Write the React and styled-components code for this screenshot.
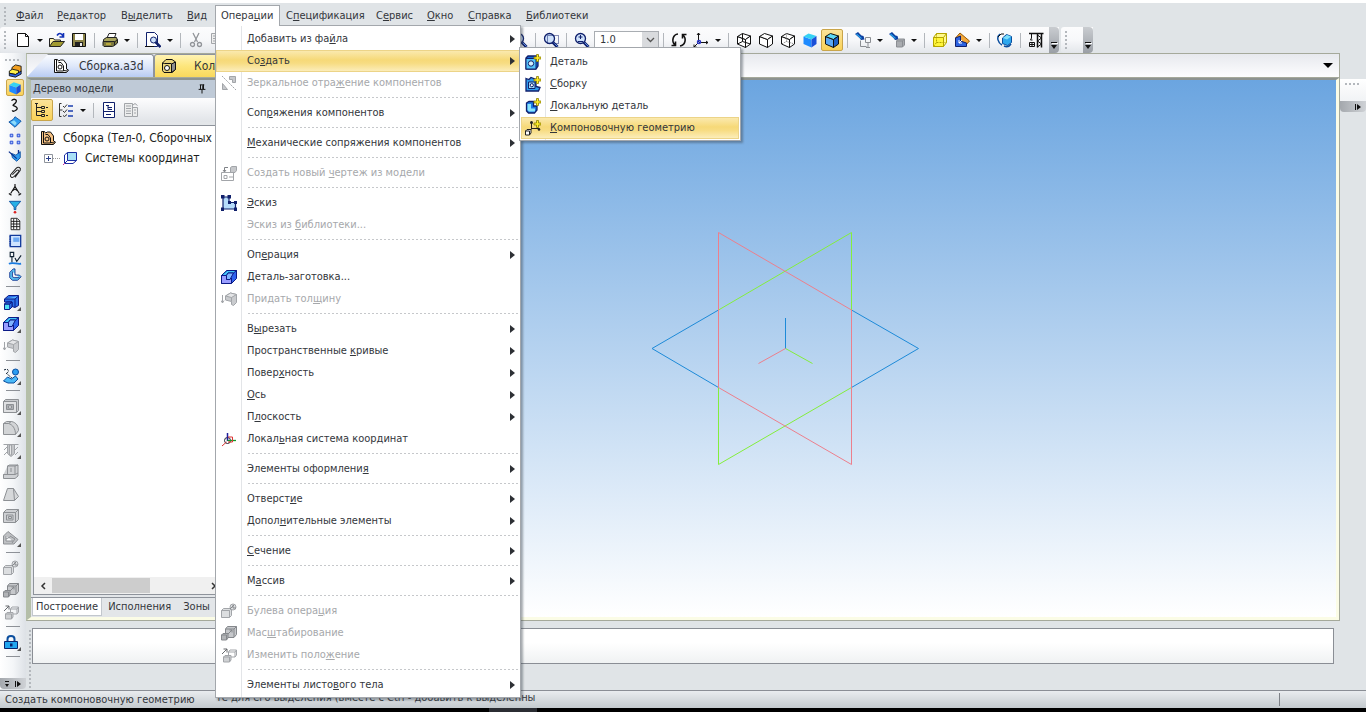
import React from 'react';
import styled, { createGlobalStyle, css } from 'styled-components';

const GlobalStyle = createGlobalStyle`
  * {
    box-sizing: border-box;
  }
  body {
    margin: 0;
    overflow: hidden;
    background: #e0e4e7;
    color: #33363b;
    font: 11px/16px 'DejaVu Sans Condensed', 'DejaVu Sans', sans-serif;
  }
  button, select, input {
    margin: 0;
    padding: 0;
    border: 0;
    background: transparent;
    color: inherit;
    font: inherit;
  }
  svg {
    display: block;
    flex: none;
  }
`;

const NAVY = '#10206c';
const GREY = '#a2a5a9';

const highlight = css`
  background: linear-gradient(#fbebb4, #f6d978 45%, #f7dc82 60%, #fcefc0);
  box-shadow: inset 0 0 0 1px #ecd488;
`;

/* ---------- page ---------- */

const Page = styled.div`
  display: flex;
  flex-direction: column;
  min-height: 100vh;
  border-top: 3px solid #fff;
`;

const MenuBar = styled.nav`
  display: flex;
  align-items: stretch;
  position: relative;
  z-index: 10;
  height: 24px;
  padding: 2px 0 0 4px;
  background: #e0e4e7;
`;

const Grip = styled.span`
  flex: none;
  align-self: center;
  width: ${({ $row }) => ($row ? '16px' : '2px')};
  height: ${({ $row, $length }) => ($row ? '2px' : $length || '18px')};
  background: ${({ $row }) =>
    `repeating-linear-gradient(${$row ? '90deg' : '180deg'}, #b4b8bd 0 2px, transparent 2px 4px)`};
`;

const MenuEntry = styled.div`
  position: relative;
  flex: none;
  width: ${({ $width }) => $width}px;
  ${({ $first }) => $first && 'margin-left: 4px;'}
`;

const MenuButton = styled.button`
  width: 100%;
  height: 21px;
  padding: 0 6px;
  text-align: left;
  white-space: nowrap;
  ${({ $open }) =>
    $open &&
    css`
      position: relative;
      z-index: 2;
      background: #fff;
      border: 1px solid #a3a7ac;
      border-bottom: 0;
      padding: 0 5px;
    `}
`;

const Dropdown = styled.div`
  position: absolute;
  top: 20px;
  left: 0;
  width: 306px;
  padding: 2px 0 1px;
  border: 1px solid #a3a7ac;
  background: linear-gradient(90deg, #fff 25px, #e3e5e8 25px 26px, #fff 26px);
  box-shadow: 2px 2px 2px rgba(60, 70, 80, 0.45);
`;

const Submenu = styled(Dropdown)`
  top: 21px;
  left: 303px;
  z-index: 3;
  width: 222px;
  padding: 3px 1px 1px;
`;

const Row = styled.button`
  display: flex;
  align-items: center;
  width: 100%;
  height: 22px;
  padding-right: 5px;
  text-align: left;
  color: ${({ disabled }) => (disabled ? '#a6a8ab' : 'inherit')};
  ${({ $active }) => $active && highlight}
`;

const RowIcon = styled.span`
  flex: none;
  width: ${({ $sub }) => ($sub ? '29px' : '31px')};
  padding-left: ${({ $sub }) => ($sub ? '4px' : '5px')};
`;

const RowLabel = styled.span`
  flex: 1;
  white-space: nowrap;
`;

const MenuLine = styled.hr`
  height: 8px;
  margin: 0 1px 0 32px;
  border: 0;
  background: repeating-linear-gradient(90deg, #c6c8cb 0 2px, transparent 2px 4px) 0 3px / 100% 1px no-repeat;
`;

const RightArrow = styled.i`
  width: 0;
  height: 0;
  border: 4px solid transparent;
  border-left: 5px solid #2d3035;
  border-right: 0;
`;

/* ---------- toolbars ---------- */

const Bars = styled.div`
  display: flex;
  gap: 2px;
  height: 26px;
`;

const Bar = styled.div`
  display: flex;
  align-items: center;
  background: linear-gradient(#fcfcfd, #f7f8fa 50%, #e3e6ea);
  border-radius: 3px 0 0 3px;
  padding-left: 4px;
`;

const BarSpace = styled.span`
  flex: none;
  width: ${({ $width }) => $width}px;
`;

const Tool = styled.button`
  display: flex;
  flex: none;
  align-items: center;
  justify-content: center;
  width: 22px;
  height: 22px;
  ${({ $on }) =>
    $on &&
    css`
      background: linear-gradient(#fbe39a, #fad257);
      border: 1px solid #c9a54a;
      border-radius: 2px;
    `}
`;

const Caret = styled.button`
  flex: none;
  width: 12px;
  height: 22px;
  &::after {
    content: '';
    display: block;
    margin: 0 auto;
    width: 0;
    border: 3px solid transparent;
    border-top-color: #111;
    border-bottom: 0;
  }
`;

const BarLine = styled.span`
  flex: none;
  width: 1px;
  height: 15px;
  margin: 0 4px;
  background: #b3b7bc;
`;

const Overflow = styled.button`
  display: flex;
  align-items: flex-end;
  justify-content: center;
  width: 10px;
  height: 26px;
  padding-bottom: 3px;
  border-radius: 0 4px 4px 0;
  background: linear-gradient(#c9ccd0, #9a9fa6);
`;

const ScaleBox = styled.div`
  display: flex;
  width: 65px;
  height: 19px;
  margin-left: 1px;
  border: 1px solid #a9adb2;
  background: #fff;
`;

const ScaleSelect = styled.select`
  flex: 1;
  min-width: 0;
  appearance: none;
  padding-left: 5px;
  background: #fff;
`;

const ScaleArrow = styled.span`
  display: flex;
  align-items: center;
  justify-content: center;
  width: 16px;
  background: #d9dbde;
`;

/* ---------- body ---------- */

const Body = styled.div`
  display: flex;
  flex: 1;
`;

const SideBar = styled.aside`
  display: flex;
  flex-direction: column;
  flex: none;
  width: 26px;
  margin-bottom: 1px;
  background: linear-gradient(90deg, #fff, #f4f6f8 50%, #dde1e6);
`;

const SideGrip = styled.div`
  height: 9px;
  padding: 4px 0 0 5px;
  display: flex;
`;

const SmallTool = styled(Tool)`
  width: 18px;
  height: 17px;
  margin-left: 6px;
`;

const BigTool = styled(Tool)`
  position: relative;
  ${({ $more }) =>
    $more &&
    css`
      &::after {
        content: '';
        position: absolute;
        right: 1px;
        bottom: 2px;
        border: 2px solid #555;
        border-top-color: transparent;
        border-left-color: transparent;
      }
    `}
`;

const SideLine = styled.span`
  width: 14px;
  height: 8px;
  margin-left: 6px;
  background: linear-gradient(#8d9197, #8d9197) 0 3px / 100% 1px no-repeat;
`;

const SideEnd = styled.button`
  display: flex;
  align-items: center;
  justify-content: space-evenly;
  width: 26px;
  height: 11px;
  margin-top: ${({ $push }) => ($push ? 'auto' : 0)};
  border-radius: 0 0 4px 4px;
  background: linear-gradient(90deg, #a4a8ad, #cfd2d6);
`;

const Work = styled.div`
  display: flex;
  flex: 1;
  flex-direction: column;
  min-width: 0;
`;

const DocArea = styled.div`
  display: flex;
  flex: 1;
`;

const DocWindow = styled.main`
  display: flex;
  flex: 1;
  flex-direction: column;
  min-width: 0;
  border: 1px solid #a5a99b;
  border-left-color: #b4bea8;
`;

const DocTabs = styled.div`
  display: flex;
  height: 24px;
  background: linear-gradient(#e7e9ee, #fdfdfe);
  border-bottom: 1px solid #a5a99b;
`;

const DocTab = styled.button`
  display: flex;
  align-items: center;
  width: ${({ $wide }) => ($wide ? '127px' : '130px')};
  padding-left: ${({ $wide }) => ($wide ? '25px' : '6px')};
  gap: ${({ $wide }) => ($wide ? '10px' : '17px')};
  font-size: 12px;
  white-space: nowrap;
  background: ${({ $wide }) =>
    $wide ? 'linear-gradient(#fafcff, #dfe8fa 50%, #b9ccf3)' : 'linear-gradient(#fff3b4, #fde67c 50%, #f9d85c)'};
  border: 1px solid #8e939b;
  border-bottom: 0;
  border-radius: 3px 3px 0 0;
  ${({ $wide }) => $wide && 'clip-path: polygon(0 100%, 21px 0, 100% 0, 100% 100%);'}
`;

const TabList = styled.button`
  width: 22px;
  margin-left: auto;
  &::after {
    content: '';
    display: block;
    width: 0;
    margin: 0 auto;
    border: 5px solid transparent;
    border-top-color: #000;
    border-bottom: 0;
  }
`;

const DocBody = styled.div`
  display: flex;
  flex: 1;
  border: 3px solid #fbfce6;
  border-top: 2px solid #8d9390;
  border-left: 4px solid #b4bea8;
`;

const TreePanel = styled.section`
  display: flex;
  flex-direction: column;
  flex: none;
  width: 203px;
  background: #e3e6e9;
`;

const PanelTitle = styled.header`
  display: flex;
  align-items: center;
  justify-content: space-between;
  height: 18px;
  padding: 0 26px 0 2px;
  background: #bfcad7;
`;

const PanelTools = styled.div`
  display: flex;
  align-items: center;
  height: 24px;
  background: linear-gradient(#fdfdfe, #e1e4e8);
`;

const TreeBox = styled.div`
  display: flex;
  flex: 1;
  flex-direction: column;
  margin-top: 3px;
  margin-left: 2px;
  padding-top: 2px;
  background: #fff;
  border: 1px solid #8e939b;
  overflow: hidden;
`;

const TreeRow = styled.div`
  display: flex;
  align-items: center;
  height: 20px;
  padding-left: ${({ $child }) => ($child ? '10px' : '6px')};
  gap: 7px;
  white-space: nowrap;
  font-size: 12px;
  color: #1c1d20;
`;

const TreeLead = styled.span`
  display: flex;
  align-items: center;
  flex: none;
  width: 11px;
`;

const ScrollBar = styled.div`
  display: flex;
  align-items: center;
  height: 17px;
  margin-top: auto;
  background: #f0f0f0;
`;

const ScrollStep = styled.button`
  display: flex;
  align-items: center;
  justify-content: center;
  width: 18px;
`;

const ScrollTrack = styled.div`
  width: 153px;
`;

const ScrollThumb = styled.div`
  width: 98px;
  height: 15px;
  background: #cdcdcd;
`;

const PanelTabs = styled.div`
  display: flex;
  height: 20px;
  margin-top: 2px;
  padding: 0 0 1px 1px;
  border-top: 1px solid #8e939b;
`;

const PanelTab = styled.button`
  padding: 0 ${({ $on }) => ($on ? '3px' : '6px')};
  background: ${({ $on }) => ($on ? '#fff' : 'transparent')};
  border: ${({ $on }) => ($on ? '1px solid #c2c7cd' : '0')};
  border-top: 0;
`;

const Canvas = styled.section`
  display: flex;
  flex: 1;
  align-items: center;
  justify-content: center;
  background: linear-gradient(#6ba5e0, #fff);
`;

const RightRail = styled.aside`
  flex: none;
  width: 26px;
  padding-top: 26px;
`;

const RailStub = styled.div`
  height: 22px;
  padding: 4px 0 0 5px;
  background: linear-gradient(#fff, #f1f3f5);
`;

const Messages = styled.div`
  display: flex;
  flex: none;
  gap: 1px;
  height: 69px;
  padding: 7px 32px 0 3px;
`;

const MessageBox = styled.input`
  flex: 1;
  height: 36px;
  border: 1px solid #8a8e95;
  background: linear-gradient(#fff 40%, #f0f2f3);
`;

const Status = styled.footer`
  display: flex;
  align-items: center;
  height: 18px;
  padding-left: 5px;
  border-top: 1px solid #8a8e95;
  background: linear-gradient(#e9ecef, #c4cace);
  white-space: nowrap;
`;

const StatusHint = styled.span`
  flex: none;
  width: 211px;
`;

const StatusText = styled.span`
  flex: 1;
  height: 18px;
  line-height: 14px;
`;

const StatusCell = styled.span`
  width: 87px;
  height: 13px;
  border-left: 1px solid #7d8187;
`;

const Taskbar = styled.div`
  height: 4px;
  background: linear-gradient(90deg, #000 489px, #2b2d33 489px 537px, #000 537px);
`;

/* ---------- icons, all on a 16 x 16 grid ---------- */

const Box = ({ front = '#fff', top = front, side = front, line = '#111', children }) => (
  <g stroke={line} strokeLinejoin="round">
    <path fill={front} d="M1.5 4.5l8 3v8l-8-3.5z" />
    <path fill={top} d="M1.5 4.5l5-3 8 2.5-5 3.5z" />
    <path fill={side} d="M9.5 7.5l5-3.5v8l-5 3.5z" />
    {children}
  </g>
);

const Block = ({ front, side, line, children }) => (
  <g stroke={line} strokeLinejoin="round">
    <path fill={side} d="M1.5 5.5l3-4h10v9l-3 4z" />
    <path fill={front} d="M1.5 5.5h10v9h-10z" />
    <path fill="none" d="M11.5 5.5l3-4" />
    {children}
  </g>
);

const Plus = () => (
  <path fill="#ffee2a" stroke="#8c7d00" strokeWidth=".8" d="M11.5.5h2V3H16v2h-2.5v2.500h-2V5H9V3h2.500z" />
);

const Glass = ({ children }) => (
  <g>
    <path d="M9.5 10l5 5" stroke={NAVY} strokeWidth="3" />
    <path d="M10.5 10.5l4 4" stroke="#5f8fe0" />
    <circle cx="6.5" cy="6.5" r="5" fill="#cfe2fb" stroke={NAVY} strokeWidth="1.3" />
    {children}
  </g>
);

const assembly = (fill) => (
  <g stroke="#111" strokeLinejoin="round">
    <path fill={fill} d="M1.5 1.5h3L5.500 3l2-1h3l3 4v5l2 1-2 2.500h-12z" />
    <path fill="none" d="M3.5 2v11h7V8L8 4.500H5.500M10.500 12.500l4 .5" />
    <circle cx="7" cy="9" r="2" fill={fill} />
  </g>
);

const nut = (fill) => (
  <g stroke="#111" strokeLinejoin="round">
    <path fill={fill} d="M1.5 5L5 1.5h6L14.500 4v7.500l-3.500 3H3l-1.500-2z" />
    <path fill="#8f8f8f" d="M10.5 6l4-2v7.500l-4 3z" />
    <path fill="none" d="M1.5 5l2 .5h7" />
    <circle cx="6" cy="10" r="2.5" fill="#fff" />
  </g>
);

const thicken = (
  <g stroke={GREY} fill="#c9cbce" strokeLinejoin="round">
    <path d="M4.500 5l5-3 6 1.500v8l-3 3-2-1v-3l-6-1.500z" />
    <path fill="#e4e5e7" d="M4.500 5l5-3 6 1.500-5 3z" />
    <path fill="none" d="M10.5 6.500v4" />
    <path fill="none" d="M1.5 4v8M0 9.500L1.500 12 3 9.500" />
  </g>
);

const extrude = (
  <g stroke="#0b1a86" strokeLinejoin="round">
    <path fill="#2f63ee" d="M.5 6.500l5.500-5h9.500v8l-5 5H.5z" />
    <path fill="#43c6fa" d="M.5 6.500l5.500-5h9.500L12.500 4H7L5.500 6.500z" />
    <path fill="#9a9dff" d="M.5 6.500h5v4H9L10.500 9v5.500H.5z" />
    <path fill="#7fb4ff" d="M5.500 6.500L7 4h5.500L9 10.500H5.500z" />
  </g>
);

const greyBoolean = (
  <g stroke={GREY} fill="#dcdee0" strokeLinejoin="round">
    <path d="M.5 7.500l2-2h8v7l-2 2h-8zM.5 7.500h8v7M8.500 7.500l2-2" />
    <circle cx="12" cy="4" r="3" />
    <path stroke="#85888c" d="M9 6l4-4M12 2v3h3" fill="none" />
  </g>
);

const greyScale = (
  <g stroke="#85888c" fill="#c6c8cb" strokeLinejoin="round">
    <path d="M4.500 4l2-2.500h9v8l-2.500 3H4.500zM4.500 4H13v8M13 4l2.500-2.500" />
    <path fill="#b2b4b7" d="M.5 10L2 8.500h5V13l-1.500 2h-5zM.5 10h5v5" />
    <path fill="none" d="M7 9l4-4M8.500 5H11v2.500" />
  </g>
);

const greyMove = (
  <g stroke={GREY} fill="#e6e7e8" strokeLinejoin="round">
    <path fill="none" d="M7.500 5L9 3h6.500v5L14 10H7.500zM7.500 5H14v5M14 5l1.500-2" />
    <path fill="#cfd1d3" d="M2.500 10L4 8.500h6V13l-1.500 2h-6zM2.500 10h6v5" />
    <path stroke="#66696d" fill="none" d="M1 7l5-5M2.500 2H6v3.500" />
  </g>
);

const csys = (
  <g fill="none">
    <circle cx="6.5" cy="9.5" r="3" stroke="#223" />
    <path stroke="#1d1d9a" strokeWidth="1.5" d="M6.500 2v8" />
    <path stroke="#129a2a" strokeWidth="1.3" d="M6.500 9.500H15" />
    <path stroke="#d33" d="M7 6h4.500v5H7M5.500 11L1 15" />
  </g>
);

const sketch = (
  <g>
    <path fill="#b6dcfa" stroke={NAVY} strokeWidth="1.2" d="M2 2h6v5.500h6.500V14H2z" />
    <path fill={NAVY} d="M0 0h3.500v3.500H0zM6.500 0H10v3.500H6.500zM7 6h3v3H7zM13 6h3v3h-3zM0 12.500h3V16H0zM13 12.500h3V16h-3z" />
  </g>
);

const torch = (
  <g>
    <path fill="#0c3fa0" d="M0 2L3 0l3.500 3.500 2 .5 1 3.500L6 8 4.500 6z" />
    <path stroke="#29a0e8" strokeWidth="1.2" d="M1.500 2l5 4.500" />
  </g>
);

const icons = {
  blank: <path fill="#fff" stroke="#111" d="M2.500 1.500h8l3 3v10h-11zM10.500 1.500v3h3" />,
  open: (
    <g>
      <path fill="#fff4a8" stroke="#222" d="M.5 14.500v-8h4l1 1.500h6v2" />
      <path fill="#a19a2f" stroke="#222" d="M.5 14.500l3.500-5h11.500l-4 5z" />
      <path fill="none" stroke="#1232b8" strokeWidth="1.6" d="M8 3.500c2-3 4-2.500 6 .5M14.500 1v4h-4" />
    </g>
  ),
  save: (
    <g>
      <path fill="#8c8448" stroke="#111" d="M1.500 1.500h13v13h-13z" />
      <path fill="#fff" d="M4 2h8v6H4z" />
      <path fill="#222" d="M4 10h8v4H4z" />
      <path fill="#eee" d="M9 11h2v3H9z" />
    </g>
  ),
  print: (
    <g stroke="#222" strokeLinejoin="round">
      <path fill="#fff" d="M5 6l2-4.500h7L12 7z" />
      <path fill="#a7a35d" d="M1.500 7.500l3-2h10l1 3-3 2.500h-11z" />
      <path fill="#7e7a40" d="M1 9.500h11.500v4l-2 1H2l-1-1zM12.500 10l3-2.500v3.500l-3 2.500" />
      <path stroke="#f5d83a" d="M4 12h5" />
    </g>
  ),
  preview: (
    <g>
      <path fill="#fff" stroke={NAVY} d="M1.500.5h8l3 3v11h-11z" />
      <circle cx="8.5" cy="8" r="3" fill="#cfe2fb" stroke={NAVY} />
      <path stroke={NAVY} strokeWidth="2.5" d="M10.500 10l5 5" />
      <path stroke="#111" d="M0 14.500h9" />
    </g>
  ),
  cut: (
    <g fill="none" stroke="#919499" strokeWidth="1.3">
      <path d="M5 1l4.500 9M11 1l-4.500 9" />
      <circle cx="4.5" cy="12.5" r="2" />
      <circle cx="11.5" cy="12.5" r="2" />
    </g>
  ),
  copy: <path fill="#eee" stroke={GREY} d="M1.500 1.500h8v10h-8zM3 4h5M3 6.500h5M3 9h5M6.500 6.500h8v8h-8z" />,
  glass: <Glass />,
  glassArea: (
    <Glass>
      <path fill="none" stroke={NAVY} strokeDasharray="1 1" d="M4.500 3.500h11v8h-11z" />
    </Glass>
  ),
  glassPlus: (
    <Glass>
      <path stroke={NAVY} d="M6.500 3v4M4.500 5h4M4 9.500h5" />
    </Glass>
  ),
  rotate: (
    <g fill="none" stroke="#111" strokeWidth="1.6">
      <path d="M7 2C2 2.500 0 9 4 13M.5 13.500h4v-4M9 14c5-.5 7-7 3-11M15.500 2.500h-4v4" />
    </g>
  ),
  axes: (
    <g fill="none" stroke="#111">
      <path d="M5.500 10V1M4 3l1.500-2L7 3M6 10.500h9M13 9l2 1.500-2 1.500M5 11l-4 4M1 12.500V15h2.500" />
      <circle cx="6" cy="10" r="1.5" stroke="#2a36c8" strokeWidth="1.5" />
    </g>
  ),
  cubeWire: (
    <Box>
      <path fill="none" d="M6.500 1.500v8l8 2.500M6.500 9.500l-5 2.500" />
    </Box>
  ),
  cube: <Box />,
  cubeHidden: (
    <Box>
      <path fill="none" stroke="#777" strokeDasharray="1 1" d="M6.500 1.500v8l8 2.500M6.500 9.500l-5 2.500" />
    </Box>
  ),
  cubeBlue: <Box front="#1f8bff" top="#35d2f4" side="#1b4fd8" line="none" />,
  cubeShaded: <Box front="#5aa8f4" top="#5fd9f5" side="#1c5fc4" />,
  torchRing: (
    <g fill="none">
      {torch}
      <path stroke="#8b8e93" d="M5.500 8.500v6h6M10.500 5.500h5v5h-5zM13 11v4M11 15.500h4" />
    </g>
  ),
  torchCube: (
    <g>
      {torch}
      <path fill="#a9acb0" stroke="#8b8e93" d="M7.500 9l2-2h6v6l-2 2h-6zM7.500 9h6v6M13.500 9l2-2" />
    </g>
  ),
  cubeYellow: (
    <Block front="#fff53a" side="#fff98c" line="#b4a400">
      <path fill="none" strokeDasharray="2 1" d="M4.500 1.500v9h10M1.500 14.500l3-4" />
    </Block>
  ),
  section: (
    <g strokeLinejoin="round">
      <path fill="#f2a73a" stroke="#9a5a00" d="M1.500 6L6 1l9.500 8-4.500 5z" />
      <path fill="#2d63e0" stroke={NAVY} d="M1.500 6l5-2v5l6 2v3.500h-11z" />
      <path fill="none" stroke="#fff" d="M8 8l-3 3V8M5 11h3" />
    </g>
  ),
  refresh: (
    <g>
      <path fill="#2ea8ee" stroke="#0b4e9e" d="M5.500 6l4-3.500 5 2v6l-4 3-5-2z" />
      <path fill="#7fe0fb" d="M6 6l4-3 4 1.500-4 3z" />
      <path fill="none" stroke="#0b4e9e" strokeWidth="1.5" d="M3 2C-1 5 1 11 5 13M14 12c-2 3-5 3-7 2" />
      <path fill="none" stroke="#111" d="M1 5l3-3h3" />
    </g>
  ),
  crane: (
    <g fill="none" stroke="#111">
      <path strokeWidth="1.5" d="M1 1.500h14.500M9.500 2v13.500M13.500 2v13.500" />
      <path d="M9.500 3l4 3-4 3 4 3-4 3M3.500 2v4l-1 2h2M1.500 10.500h5v4h-5zM4 10.500v4M1.500 12.500h5" />
    </g>
  ),
  assembly: assembly('#fff'),
  assemblyTan: assembly('#f5c183'),
  nut: nut('#e7d37c'),
  tree: (
    <path fill="none" stroke="#222" d="M2.500 2v11.500H7M2.500 5.500H7M2.500 9.500H7M1 1.500h3M7.500 4.500h3v2h-3zM7.500 8.500h3v2h-3zM7.500 12.500h3v2h-3zM12 5.500h2M12 13.500h2" />
  ),
  checks: (
    <g fill="none">
      <path stroke="#333" d="M3.500 1.500h-2v13h2M1.500 8h3M5 4l1.500 1.500L9 2.500M5 9l1.500 1.500L9 7.500M5 13.500l1.500 1L9 12.500" />
      <path stroke="#1c3fae" strokeWidth="1.6" d="M10 4h5M10 9h5M10 14h5" />
    </g>
  ),
  sheet: <path fill="#fff" stroke={NAVY} d="M2.500.5h11v15h-11zM2.500 9.500h11M5 3.500h3M7 5.500h4M7 3.500v4h4M5 12.500h5" />,
  report: <path fill="#eceded" stroke={GREY} d="M1.500 1.500h8v13h-8zM3 4h5M3 6.500h5M3 9h5M3 11.500h5M9.500 5.500h5v9h-5M10 3l2-1.500 2.500 2M11 8h2M11 11h2" />,
  pin: <path fill="none" stroke="#111" strokeWidth="1.3" d="M5 2.500h6M6 2.500v6M10 2v6.500M9 3v5M3.500 8.500h9M8 9v5" />,
  plane: (
    <g>
      <path fill="#a9e0f7" stroke="#1b2fa4" d="M5.500 2.500h9v8h-9z" />
      <path fill="none" stroke="#1b2fa4" d="M2.500 5v8.500H11M5.500 2.500L2.500 5M5.500 10.500l-3 3M14.500 10.500l-3.500 3" />
      <path stroke="#c332a0" d="M1 15l2-2" />
    </g>
  ),
  colorBox: (
    <g stroke="#111" strokeLinejoin="round">
      <path fill="#f2a020" d="M4.500 4l4-3L15 2.500v6l-3 2-7.500-2z" />
      <path fill="#fff24a" d="M1.500 8L5 6l7 1.500v3L8.500 12l-7-1.500z" />
      <path fill="#2d63e0" d="M1.500 10.500l7 1.500L15 8v3.500L8.500 15l-7-1.500z" />
    </g>
  ),
  curve: <path fill="none" stroke="#111" strokeWidth="1.5" d="M4 3c3-3 7-1 5 2s-5 3-2 4 5 3 2 5-4 1-4 0" />,
  diamond: (
    <g>
      <path fill="#2f9df0" stroke="#0b4e9e" d="M1 8l5-3 2-3 7 5-4 4-3 3z" />
      <path fill="#8fdcfb" d="M3 8l4-2 3 3-2 3z" />
    </g>
  ),
  points: (
    <path fill="#a7c6ff" stroke="#1c3fd0" d="M2.500 2.500h3v3h-3zM10.500 2.500h3v3h-3zM2.500 10.500h3v3h-3zM10.500 10.500h3v3h-3z" />
  ),
  mate: (
    <g>
      <path fill="#2f9df0" stroke="#0b4e9e" d="M4 5l5 2 5-4v7l-4 4-5-4z" />
      <path stroke="#0b2e8e" strokeWidth="1.5" d="M1 3l9 8M12 1v4" />
    </g>
  ),
  clip: (
    <path fill="none" stroke="#222" strokeWidth="1.2" d="M5 10l5-5c2-1 3 0 2 2l-5 5c-2 2-5 1-4-2l6-7c3-3 6-1 5 2l-6 8" />
  ),
  compass: <path fill="none" stroke="#111" strokeWidth="1.3" d="M8 1v3M8 4L3 12M8 4l5 8M5 9l3-2 3 2M1 12l3 2M15 12l-3 2" />,
  filter: (
    <g>
      <path fill="#27b0e6" stroke="#0b4e9e" d="M1.500 1.500h13L9 8v3H7V8z" />
      <circle cx="8" cy="14" r="1.5" fill="#d22" />
    </g>
  ),
  grid: <path fill="#fff" stroke="#111" d="M3.500 1.500h7l3 3v10h-10zM3.500 5h10M3.500 8h10M3.500 11h10M6.500 2v12M10 2v12" />,
  book: (
    <g>
      <path fill="#cfe4ff" stroke="#123a9c" strokeWidth="1.5" d="M2.500 1.500h12v13h-12z" />
      <path fill="#6ea9f2" d="M6 4h7v5H6z" />
      <path stroke="#123a9c" strokeWidth="2" strokeDasharray="1 1" d="M2.500 2v12" />
    </g>
  ),
  dims: (
    <g fill="none">
      <path stroke="#123" strokeWidth="1.3" d="M2.500 1.500h4v5h-4zM4.500 7v6M8 8l2 4 5-7" />
      <path stroke="#1a7be0" strokeWidth="2" d="M1 14.500c5-2 9 1 14 0" />
    </g>
  ),
  bracket: <path fill="#5cc4f4" stroke="#0b2e8e" d="M2 5l4-4h2v7h5l2 2-4 4H5l-3-3zM5 4v6l2 1h6" />,
  base: (
    <g stroke="#0b1a86" strokeLinejoin="round">
      <path fill="#2b6fe8" d="M1.500 5l4-3.500h10v10l-3.500 2-3-1V8H1.500z" />
      <path fill="#59b5ff" d="M1.500 5H12l3.500-3M12 5v8" />
      <path fill="#4fe0f4" d="M1.500 10h5v5.500h-5z" />
      <path fill="#2b6fe8" d="M1.500 10l2-2H9l-2.500 2zM6.500 10L9 8v5l-2.500 2.500" />
    </g>
  ),
  extrude,
  thicken,
  surface: (
    <g>
      <circle cx="12.5" cy="4" r="3" fill="#2b9df2" stroke="#0b4e9e" />
      <path fill="none" stroke="#123" strokeDasharray="2 1" d="M1 2c4-2 6 1 3 3M3 5l7 6" />
      <path fill="#4ab9f7" stroke="#0b4e9e" d="M.5 13l4-4 4 2 4-3 2.500 3-4 4H5z" />
    </g>
  ),
  shell: (
    <g stroke="#8d9094" fill="#c9cbce">
      <path d="M.5 3.500l2-2h13v11l-2 2H.5z" />
      <path fill="#dfe0e2" d="M.5 3.500h13v11H.5z" />
      <path fill="#aeb0b4" d="M3.500 6.500h7v5h-7z" />
      <path fill="#fff" d="M5.500 8h3v2h-3z" />
    </g>
  ),
  fillet: <path fill="#d2d4d6" stroke="#8d9094" d="M.5 3.500l3-2h5c5 1 7 5 7 9l-3 4H.5zM.5 3.500h5c4 1 7 5 7 11M5.500 3.500l3-2" />,
  hole: (
    <g stroke={GREY}>
      <path d="M1 8l3-3M12 8l3-3M1 13l3-3M12 13l3-3M.5 2.500h15" />
      <path fill="#c3c5c8" d="M4.500 2.500v9l3.500 3 3.500-3v-9z" />
      <path fill="#e6e7e8" d="M6.500 3h2v10h-2z" />
    </g>
  ),
  rib: <path fill="#cfd1d4" stroke="#8d9094" d="M4.500 2l2-1H15v11l-3 2.500H.5v-4h4zM4.500 2H12v8.500H.5M12 2l3-1M12 10.500L15 9M8 4v4" />,
  draft: <path fill="#d6d8da" stroke="#8d9094" d="M.5 14.500l4-12h6l5 8-4 4zM10.500 2.500l1 12" />,
  pocket: <path fill="#cfd1d4" stroke="#8d9094" d="M.5 4.500l3-3h12v10l-3 3H.5zM.5 4.500h12v10M12.500 4.500l3-3M3.500 7H10v5H3.500zM5.500 8.500h3v2h-3z" />,
  sectionGrey: <path fill="#bfc1c4" stroke="#8d9094" d="M.5 6L5 1.500l10 8-4 4.500H.5zM3 6v5h7M7 6l5 3-3 4M3 9l4-2" />,
  lock: (
    <g>
      <path fill="none" stroke="#0b4e9e" strokeWidth="2" d="M4.500 7V5c0-4 7-4 7 0v2" />
      <path fill="#21a6f0" stroke="#08246e" d="M1.500 7.500h13v7h-13z" />
      <path fill="#08246e" d="M7 9.500h2.500v3H7z" />
    </g>
  ),
  mirror: (
    <g fill="#c6c8cb" stroke={GREY}>
      <path d="M8.500 1.500h6v6h-3v-3h-3zM1.500 8.500l5 6h-5z" />
      <path strokeDasharray="2 1" d="M1 1l14 14" />
    </g>
  ),
  newDrawing: (
    <g fill="none" stroke={GREY}>
      <path d="M.5 7.500h12v8H.5zM3 10.500h3v3H3zM8 12h4" />
      <path fill="#c6c8cb" d="M9.500 2.500l1.500-1h4.500v4L14 7.500H9.500z" />
      <path stroke="#808388" d="M7 2.500H3.500v4M2 5l1.500 2L5 5" />
    </g>
  ),
  sketch,
  csys,
  greyBoolean,
  greyScale,
  greyMove,
  newPart: (
    <g>
      <path fill="#1668d8" stroke={NAVY} strokeWidth="1.3" d="M1 4l2-2h10v10l-2 3H1z" />
      <path fill="#54c3fa" stroke={NAVY} d="M1 4.500h10V15H1z" />
      <circle cx="6" cy="9.5" r="2.7" fill="#d5f1ff" stroke={NAVY} />
      <Plus />
    </g>
  ),
  newAssembly: (
    <g>
      <path fill="#2f9df0" stroke={NAVY} strokeWidth="1.3" d="M1 2.500l3 1 2-2 5 2v7l4 1-1.500 3.500H1z" />
      <path fill="#9adbfb" stroke={NAVY} d="M3.500 6H10v6.500H3.500z" />
      <circle cx="6.8" cy="9.2" r="1.6" fill="#fff" stroke={NAVY} />
      <Plus />
    </g>
  ),
  newLocal: (
    <g>
      <path fill="#1c7ae6" stroke={NAVY} strokeWidth="1.3" d="M1.500 5L4 3.500h4.500V8H12v4l-2.500 3h-6l-2-2z" />
      <path fill="#8be5fb" d="M2.500 6H6v4.500h4v3H4L2.500 12z" />
      <Plus />
    </g>
  ),
  newLayout: (
    <g>
      <path fill="#fff" stroke="#222" d="M.5 11L2 9.500h4V13l-1.500 2h-4zM.5 11h4v4" />
      <path fill="none" stroke="#222" d="M6.500 9.500V3M6.500 8.500h8" />
      <circle cx="6.5" cy="2.5" r="1.5" fill="#222" />
      <circle cx="14" cy="9.5" r="1.3" fill="#222" />
      <Plus />
    </g>
  ),
};

const Icon = ({ name, size = 16 }) => (
  <svg width={size} height={size} viewBox="0 0 16 16" fill="none" aria-hidden="true">
    {icons[name]}
  </svg>
);

const OverflowMark = () => (
  <svg width="8" height="9" viewBox="0 0 8 9">
    <path fill="#111" d="M1 1h6v1H1zM1 4h6L4 8z" />
    <path fill="#fff" d="M2 2h6v1H2z" />
  </svg>
);

/* ---------- data ---------- */

// '&' stands before the access key, '-' is a divider line
const menus = [
  ['&Файл', 41],
  ['&Редактор', 64],
  ['В&ыделить', 66],
  ['&Вид', 34],
  ['Опера&ции', 65],
  ['С&пецификация', 90],
  ['С&ервис', 51],
  ['&Окно', 41],
  ['&Справка', 58],
  ['&Библиотеки', 72],
];

const operations = [
  { label: 'Добавить из фа&йла', sub: true },
  { label: 'Со&здать', sub: true, active: true },
  { label: 'Зеркальное отра&жение компонентов', icon: 'mirror', off: true },
  '-',
  { label: 'Соп&ряжения компонентов', sub: true },
  '-',
  { label: '&Механические сопряжения компонентов', sub: true },
  '-',
  { label: 'Создать новый &чертеж из модели', icon: 'newDrawing', off: true },
  '-',
  { label: '&Эскиз', icon: 'sketch' },
  { label: 'Эскиз из &библиотеки...', off: true },
  '-',
  { label: 'Оп&ерация', sub: true },
  { label: '&Деталь-заготовка...', icon: 'extrude' },
  { label: 'Придать тол&щину', icon: 'thicken', off: true },
  '-',
  { label: 'В&ырезать', sub: true },
  { label: 'Пространственные &кривые', sub: true },
  { label: 'Повер&хность', sub: true },
  { label: '&Ось', sub: true },
  { label: 'П&лоскость', sub: true },
  { label: 'Локал&ьная система координат', icon: 'csys' },
  '-',
  { label: 'Элементы оформлени&я', sub: true },
  '-',
  { label: 'Отверст&ие', sub: true },
  { label: 'Допол&нительные элементы', sub: true },
  '-',
  { label: '&Сечение', sub: true },
  '-',
  { label: 'М&ассив', sub: true },
  '-',
  { label: 'Булева опера&ция', icon: 'greyBoolean', off: true },
  { label: 'Мас&штабирование', icon: 'greyScale', off: true },
  { label: 'Изменить поло&жение', icon: 'greyMove', off: true },
  '-',
  { label: 'Элементы листо&вого тела', sub: true },
];

const createItems = [
  { label: '&Деталь', icon: 'newPart' },
  { label: '&Сборку', icon: 'newAssembly' },
  { label: '&Локальную деталь', icon: 'newLocal' },
  { label: '&Компоновочную геометрию', icon: 'newLayout', active: true },
];

// 'v' is a drop-down caret, '|' a divider
const fileTools = ['blank', 'v', 'open', 'save', '|', 'print', 'v', '|', 'preview', 'v', '|', 'cut', 'copy'];
const zoomTools = ['glass', '|', 'glassArea', '|', 'glassPlus'];
const viewTools = [
  '|', 'rotate', 'axes', 'v', '|', 'cubeWire', 'cube', 'cubeHidden', 'cubeBlue', 'cubeShaded', '|',
  'torchRing', 'v', 'torchCube', 'v', '|', 'cubeYellow', 'section', 'v', '|', 'refresh', '|', 'crane',
];

const modes = [
  'colorBox', 'cubeBlue', 'curve', 'diamond', 'points', 'mate', 'clip',
  'compass', 'filter', 'grid', 'book', 'dims', 'bracket',
];
const commands = [
  '|', 'base+', 'extrude+', 'thicken', '|', 'surface+', '|', 'shell+', 'fillet+', 'hole+', 'rib', 'draft',
  'pocket', 'sectionGrey+', '|', 'greyBoolean', 'greyScale', 'greyMove', '|', 'lock+', '|',
];

/* ---------- parts ---------- */

function Label({ text }) {
  const at = text.indexOf('&');
  if (at < 0) return text;
  return (
    <>
      {text.slice(0, at)}
      <u>{text[at + 1]}</u>
      {text.slice(at + 2)}
    </>
  );
}

function Tools({ items, on }) {
  return items.map((item, i) => {
    if (item === '|') return <BarLine key={i} />;
    if (item === 'v') return <Caret key={i} aria-label={items[i - 1]} />;
    return (
      <Tool key={i} $on={item === on} aria-label={item}>
        <Icon name={item} />
      </Tool>
    );
  });
}

function MenuRows({ items, nested }) {
  return items.map((item, i) =>
    item === '-' ? (
      <MenuLine key={i} />
    ) : (
      <Row key={i} role="menuitem" disabled={item.off} $active={item.active}>
        <RowIcon $sub={nested}>{item.icon && <Icon name={item.icon} />}</RowIcon>
        <RowLabel>
          <Label text={item.label} />
        </RowLabel>
        {item.sub && <RightArrow />}
      </Row>
    )
  );
}

function OperationsMenu() {
  return (
    <Dropdown role="menu">
      <MenuRows items={operations} />
      <Submenu role="menu">
        <MenuRows items={createItems} nested />
      </Submenu>
    </Dropdown>
  );
}

function ModelTree() {
  return (
    <TreePanel>
      <PanelTitle>
        Дерево модели
        <Icon name="pin" size={12} />
      </PanelTitle>
      <PanelTools>
        <Tool $on aria-label="tree">
          <Icon name="tree" />
        </Tool>
        <BarSpace $width={2} />
        <Tool aria-label="checks">
          <Icon name="checks" />
        </Tool>
        <Caret aria-label="checks list" />
        <BarLine />
        <Tool aria-label="sheet">
          <Icon name="sheet" />
        </Tool>
        <Tool aria-label="report">
          <Icon name="report" />
        </Tool>
      </PanelTools>
      <TreeBox>
        <TreeRow>
          <Icon name="assemblyTan" />
          Сборка (Тел-0, Сборочных
        </TreeRow>
        <TreeRow $child>
          <TreeLead>
            <svg width="17" height="9" viewBox="0 0 17 9">
              <path fill="#fff" stroke="#8e939b" d="M.5.5h8v8h-8z" />
              <path stroke="#2b3f8a" d="M2 4.500h5M4.500 2v5" />
              <path stroke="#999" strokeDasharray="1 1" d="M9 4.500h8" />
            </svg>
          </TreeLead>
          <Icon name="plane" />
          Системы координат
        </TreeRow>
        <ScrollBar>
          <ScrollStep aria-label="left">
            <svg width="6" height="8" viewBox="0 0 6 8">
              <path fill="none" stroke="#333" strokeWidth="1.5" d="M5 1L2 4l3 3" />
            </svg>
          </ScrollStep>
          <ScrollTrack>
            <ScrollThumb />
          </ScrollTrack>
          <ScrollStep aria-label="right">
            <svg width="6" height="8" viewBox="0 0 6 8">
              <path fill="none" stroke="#333" strokeWidth="1.5" d="M1 1l3 3-3 3" />
            </svg>
          </ScrollStep>
        </ScrollBar>
      </TreeBox>
      <PanelTabs>
        <PanelTab $on>Построение</PanelTab>
        <PanelTab>Исполнения</PanelTab>
        <PanelTab>Зоны</PanelTab>
      </PanelTabs>
    </TreePanel>
  );
}

function Planes() {
  return (
    <svg width="268" height="233" viewBox="0 0 268 233" fill="none">
      <path stroke="#1d8ad8" d="M67.500 78L1 116.500l66.500 39M200.500 78l67 38.500-67 39M134.500 117V86" />
      <path stroke="#84ee3c" d="M67.500 78l133-77.500V78M67.500 155.500v77l133-77M134.500 116.500l27 15" />
      <path stroke="#ec7f8c" d="M67.500 155.500V.5l133 77.500v154.500l-133-77M134.500 116.500l-27 15" />
    </svg>
  );
}

export default function App() {
  return (
    <>
      <GlobalStyle />
      <Page>
        <MenuBar>
          <Grip />
          {menus.map(([text, width], i) => (
            <MenuEntry key={text} $width={width} $first={i === 0}>
              <MenuButton $open={i === 4}>
                <Label text={text} />
              </MenuButton>
              {i === 4 && <OperationsMenu />}
            </MenuEntry>
          ))}
        </MenuBar>
        <Bars>
          <Bar>
            <Grip />
            <BarSpace $width={6} />
            <Tools items={fileTools} />
            <BarSpace $width={280} />
            <Tools items={zoomTools} />
            <ScaleBox>
              <ScaleSelect aria-label="scale" defaultValue="1.0">
                <option>1.0</option>
              </ScaleSelect>
              <ScaleArrow>
                <svg width="9" height="6" viewBox="0 0 9 6">
                  <path fill="none" stroke="#555" strokeWidth="1.3" d="M1 1l3.500 3.500L8 1" />
                </svg>
              </ScaleArrow>
            </ScaleBox>
            <Tools items={viewTools} on="cubeShaded" />
            <BarSpace $width={2} />
            <Overflow aria-label="more">
              <OverflowMark />
            </Overflow>
          </Bar>
          <Bar>
            <Grip />
            <BarSpace $width={16} />
            <Overflow aria-label="more">
              <OverflowMark />
            </Overflow>
          </Bar>
        </Bars>
        <Body>
          <SideBar>
            <SideGrip>
              <Grip $row />
            </SideGrip>
            {modes.map((name) => (
              <SmallTool key={name} $on={name === 'cubeBlue'} aria-label={name}>
                <Icon name={name} size={14} />
              </SmallTool>
            ))}
            {commands.map((name, i) =>
              name === '|' ? (
                <SideLine key={i} />
              ) : (
                <BigTool key={i} $more={name.endsWith('+')} aria-label={name}>
                  <Icon name={name.replace('+', '')} />
                </BigTool>
              )
            )}
            <SideEnd $push aria-label="more">
              <svg width="20" height="8" viewBox="0 0 20 8">
                <path fill="#111" d="M2 1h4v1H2zM2 4h4L4 7zM12 1h1v6h-1zM14 1l4 3-4 3z" />
              </svg>
            </SideEnd>
          </SideBar>
          <Work>
            <DocArea>
              <DocWindow>
                <DocTabs>
                  <DocTab $wide>
                    <Icon name="assembly" />
                    Сборка.a3d
                  </DocTab>
                  <DocTab>
                    <Icon name="nut" />
                    Кол
                  </DocTab>
                  <TabList aria-label="documents" />
                </DocTabs>
                <DocBody>
                  <ModelTree />
                  <Canvas>
                    <Planes />
                  </Canvas>
                </DocBody>
              </DocWindow>
              <RightRail>
                <RailStub>
                  <Grip as="div" $row />
                </RailStub>
                <SideEnd aria-label="more">
                  <svg width="20" height="8" viewBox="0 0 20 8">
                    <path fill="#111" d="M12 1h1v6h-1zM14 1l4 3-4 3z" />
                  </svg>
                </SideEnd>
              </RightRail>
            </DocArea>
            <Messages>
              <Grip $length="58px" />
              <MessageBox aria-label="messages" />
            </Messages>
          </Work>
        </Body>
        <Status>
          <StatusHint>Создать компоновочную геометрию</StatusHint>
          <StatusText>те для его выделения (вместе с Ctrl - добавить к выделенны</StatusText>
          <StatusCell />
        </Status>
        <Taskbar />
      </Page>
    </>
  );
}
